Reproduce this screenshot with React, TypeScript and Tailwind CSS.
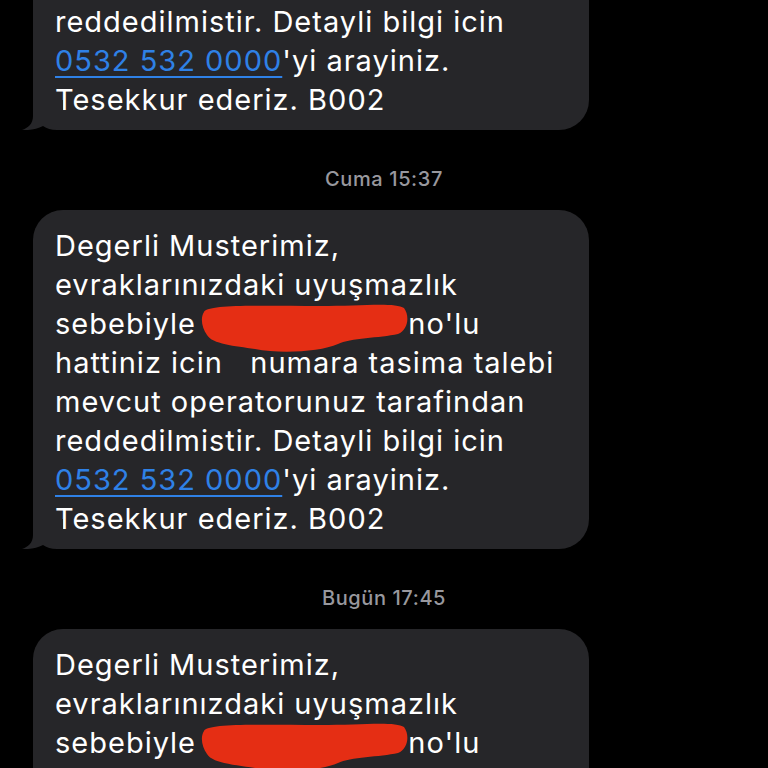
import React from "react";

const LINK = "text-[#2f81e6] underline decoration-[1.5px] underline-offset-[5px]";

function Tail() {
  return (
    <svg
      className="absolute -left-[11px] bottom-0"
      width="41"
      height="30"
      viewBox="0 0 41 30"
    >
      <path
        d="M11 0 L11 16 C11 24 6 28 0 30 C8 30.5 15 29 21 26 C25 28.5 29 30 35 30 L41 30 L41 0 Z"
        fill="#262629"
      />
    </svg>
  );
}

function Scribble() {
  return (
    <svg
      className="absolute -left-[5px] -top-[2px]"
      width="212"
      height="52"
      viewBox="0 0 212 52"
    >
      <path
        d="M4 10 C8 2 60 4 120 4 C160 4 195 0 204 6 C210 14 208 28 198 32 C180 36 150 36 138 42 C120 50 80 52 55 47 C35 44 12 42 7 33 C2 26 0 16 4 10 Z"
        fill="#e52e14"
      />
    </svg>
  );
}

function Redacted() {
  return (
    <span className="relative inline-flex w-[194px] justify-between align-top text-[#2f81e6]">
      <span>5</span>
      <span>2</span>
      <Scribble />
    </span>
  );
}

function Message({ tail = true }: { tail?: boolean }) {
  return (
    <div className="relative ml-[33px] w-[556px] rounded-[30px] bg-[#262629] pl-[22px] pr-4 pt-[16px] pb-[11px] text-[29px] leading-[39px] tracking-[1px] text-white">
      <div className="whitespace-pre">Degerli Musterimiz,</div>
      <div className="whitespace-pre">evraklarınızdaki uyuşmazlık</div>
      <div className="whitespace-pre">
        sebebiyle <Redacted /> no'lu
      </div>
      <div className="whitespace-pre">hattiniz icin   numara tasima talebi</div>
      <div className="whitespace-pre">mevcut operatorunuz tarafindan</div>
      <div className="whitespace-pre">reddedilmistir. Detayli bilgi icin</div>
      <div className="whitespace-pre">
        <span className={LINK}>0532 532 0000</span>'yi arayiniz.
      </div>
      <div className="whitespace-pre">Tesekkur ederiz. B002</div>
      {tail && <Tail />}
    </div>
  );
}

function Stamp({ day, time }: { day: string; time: string }) {
  return (
    <div className="mt-[37px] mb-[19px] text-center text-[20px] leading-[24px] font-medium tracking-[0.6px] text-[#98989e]">
      {day} {time}
    </div>
  );
}

export default function App() {
  return (
    <div
      className="h-[768px] overflow-hidden bg-black"
      style={{ fontFamily: "Inter, 'Noto Sans', sans-serif" }}
    >
      <div className="-mt-[209px]">
        <Message />
        <Stamp day="Cuma" time="15:37" />
        <Message />
        <Stamp day="Bugün" time="17:45" />
        <Message />
      </div>
    </div>
  );
}
